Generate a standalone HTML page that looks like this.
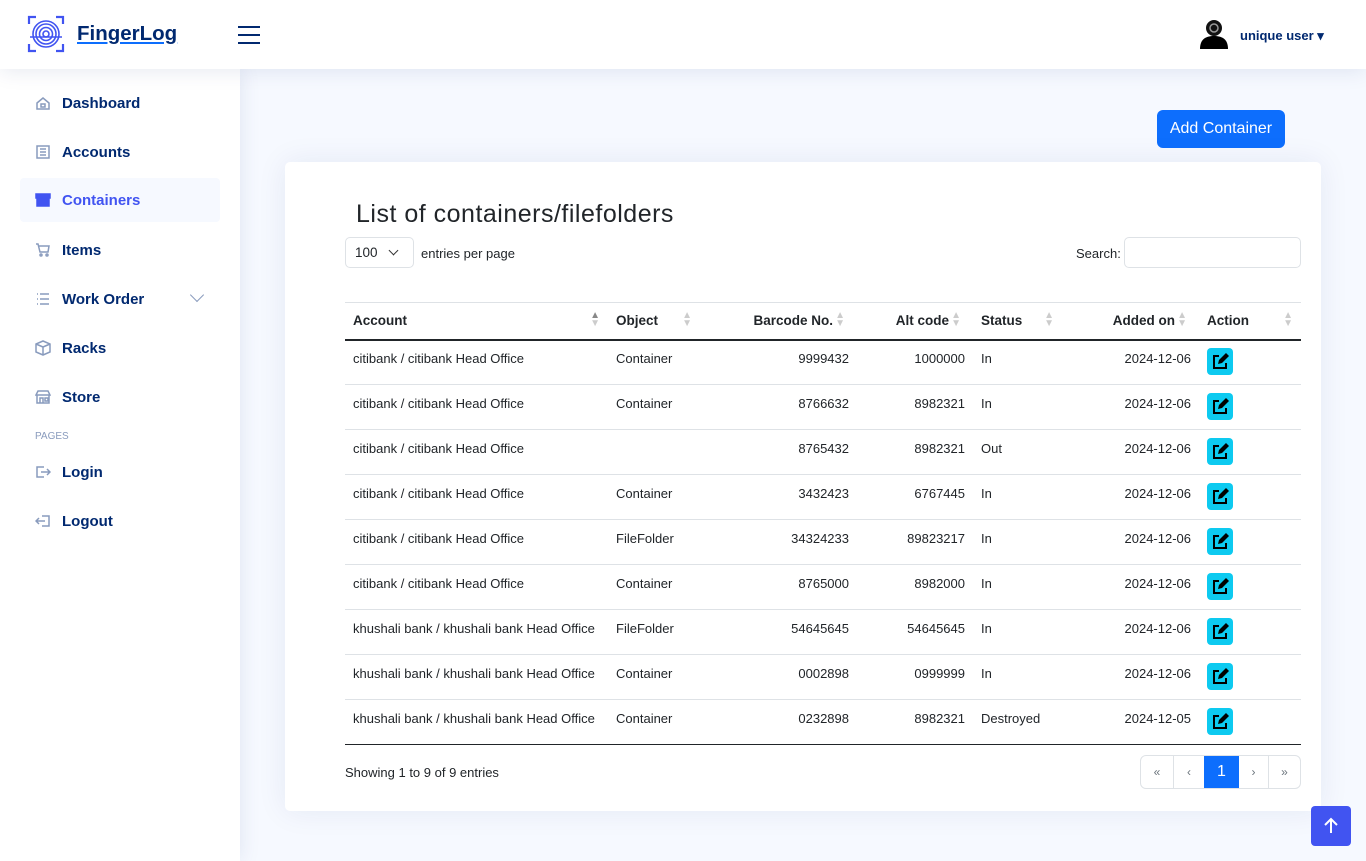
<!DOCTYPE html>
<html><head><meta charset="utf-8">
<style>
*{box-sizing:border-box;margin:0;padding:0}
body{width:1366px;height:861px;overflow:hidden;background:#f6f9ff;font-family:"Liberation Sans",sans-serif;color:#212529;position:relative}
.hdr{position:absolute;left:0;top:0;width:1366px;height:69px;background:#fff;box-shadow:0 2px 20px rgba(1,41,112,.1);z-index:2}
.side{position:absolute;left:0;top:69px;width:240px;height:792px;background:#fff;box-shadow:0 0 20px rgba(1,41,112,.1)}
.nav{position:absolute;left:20px;width:200px;height:44px;display:flex;align-items:center;padding-left:15px;font-size:15px;font-weight:bold;color:#012970}
.nav svg{width:16px;height:16px;margin-right:11px;fill:none;stroke:#899bbd;stroke-width:1.5}
.nav.act{background:#f6f9ff;color:#4154f1;border-radius:4px}
.card{position:absolute;left:285px;top:162px;width:1036px;height:649px;background:#fff;border-radius:5px;box-shadow:0 0 30px rgba(1,41,112,.08)}
table{position:absolute;left:345px;top:302px;border-collapse:collapse;font-size:13px;table-layout:fixed;width:956px}
th{height:37px;text-align:left;padding:0 8px;font-weight:bold;color:#212529;border-top:1px solid #dee2e6;border-bottom:2px solid #212529;position:relative;font-size:13.5px}
td{height:45px;padding:0 8px 6px;border-bottom:1px solid #dee2e6;color:#212529;line-height:16px;vertical-align:middle}
tr:last-child td{border-bottom:1px solid #212529}
.r{text-align:right}
th.r{padding-right:24px}
.ar{position:absolute;right:8px;top:9px;font-size:10px;line-height:8px;color:#ccc}
.ed{display:inline-block;width:26px;height:27px;background:#0dcaf0;border-radius:4px;vertical-align:middle;position:relative;top:6px;margin-top:-8px}
</style></head><body>
<div class="hdr">
<svg style="position:absolute;left:27px;top:15px" width="38" height="38" viewBox="0 0 38 38" fill="none" stroke="#4154f1" stroke-width="2.2"><path d="M2 9V2h7M29 2h7v7M36 29v7h-7M9 36H2v-7"/><g stroke-width="1.6"><circle cx="19" cy="19" r="3"/><circle cx="19" cy="19" r="6.5"/><circle cx="19" cy="19" r="10"/><circle cx="19" cy="19" r="13"/></g><path d="M3 22h32" stroke-width="1.5"/></svg>
<div style="position:absolute;left:77px;top:22px;font-size:20.5px;font-weight:bold;color:#012970;text-decoration:underline;text-decoration-color:#0d6efd">FingerLog</div>
<div style="position:absolute;left:238px;top:26px;width:22px;height:2px;background:#012970;box-shadow:0 8px 0 #012970,0 16px 0 #012970"></div>
<svg style="position:absolute;left:1198px;top:17px" width="32" height="34" viewBox="0 0 32 34"><circle cx="16" cy="11" r="8" fill="#111"/><circle cx="16" cy="11" r="4" fill="none" stroke="#999" stroke-width="1.5"/><path d="M2 32c0-10 6-13 14-13s14 3 14 13z" fill="#000"/></svg>
<div style="position:absolute;left:1240px;top:28px;font-size:13px;font-weight:bold;color:#012970">unique user ▾</div>
</div>
<div class="side">
<div class="nav" style="top:12px"><svg viewBox="0 0 16 16"><path d="M2 8l6-5 6 5v6H2z"/><rect x="6" y="9" width="4" height="3"/></svg>Dashboard</div>
<div class="nav" style="top:61px"><svg viewBox="0 0 16 16"><rect x="2" y="2" width="12" height="12"/><path d="M5 5h6M5 8h6M5 11h6"/></svg>Accounts</div>
<div class="nav act" style="top:109px"><svg viewBox="0 0 16 16"><rect x="1" y="2" width="14" height="4" fill="#4154f1" stroke="#4154f1"/><rect x="2" y="6" width="12" height="8" fill="#4154f1" stroke="#4154f1"/></svg>Containers</div>
<div class="nav" style="top:159px"><svg viewBox="0 0 16 16"><path d="M1 2h2l2 8h8l1-6H4"/><circle cx="6" cy="13" r="1"/><circle cx="12" cy="13" r="1"/></svg>Items</div>
<div class="nav" style="top:208px"><svg viewBox="0 0 16 16"><path d="M2 3h1M2 8h1M2 13h1M5 3h9M5 8h9M5 13h9"/></svg>Work Order<span style="position:absolute;left:172px;top:13px;width:10px;height:10px;border-right:1px solid #899bbd;border-bottom:1px solid #899bbd;transform:rotate(45deg)"></span></div>
<div class="nav" style="top:257px"><svg viewBox="0 0 16 16"><path d="M8 1l7 3v8l-7 3-7-3V4zM1 4l7 3 7-3M8 7v8"/></svg>Racks</div>
<div class="nav" style="top:306px"><svg viewBox="0 0 16 16"><path d="M1 6l2-4h10l2 4zM2 6v8h12V6M5 14v-5h3v5M10 9h3v3h-3z"/></svg>Store</div>
<div style="position:absolute;left:35px;top:362px;font-size:10px;color:#899bbd">PAGES</div>
<div class="nav" style="top:381px"><svg viewBox="0 0 16 16"><path d="M9 3H2v10h7M6 8h9M12 5l3 3-3 3"/></svg>Login</div>
<div class="nav" style="top:430px"><svg viewBox="0 0 16 16"><path d="M7 3h7v10H7M10 8H1M4 5L1 8l3 3"/></svg>Logout</div>
</div>
<div style="position:absolute;left:1157px;top:110px;width:128px;height:38px;background:#0d6efd;border-radius:6px;color:#fff;font-size:16px;line-height:38px;text-align:center">Add Container</div>
<div class="card"></div>
<div style="position:absolute;left:356px;top:200px;font-size:25px;letter-spacing:0.5px;color:#212529">List of containers/filefolders</div>
<div style="position:absolute;left:345px;top:237px;width:69px;height:31px;border:1px solid #dee2e6;border-radius:5px;font-size:13.5px;line-height:30px;padding-left:9px">100 <span style="position:absolute;left:44px;top:9px;width:7px;height:7px;border-right:1.5px solid #333;border-bottom:1.5px solid #333;transform:rotate(45deg)"></span></div>
<div style="position:absolute;left:421px;top:246px;font-size:13px">entries per page</div>
<div style="position:absolute;left:1076px;top:246px;font-size:13px">Search:</div>
<div style="position:absolute;left:1124px;top:237px;width:177px;height:31px;border:1px solid #dee2e6;border-radius:5px"></div>
<table>
<colgroup><col style="width:263px"><col style="width:92px"><col style="width:157px"><col style="width:116px"><col style="width:89px"><col style="width:137px"><col style="width:102px"></colgroup>
<tr><th>Account<span class="ar"><span style="color:#888">▲</span><br>▼</span></th><th>Object<span class="ar">▲<br>▼</span></th><th class="r">Barcode No.<span class="ar" style="right:12px">▲<br>▼</span></th><th class="r">Alt code<span class="ar" style="right:12px">▲<br>▼</span></th><th>Status<span class="ar">▲<br>▼</span></th><th class="r">Added on<span class="ar" style="right:12px">▲<br>▼</span></th><th>Action<span class="ar">▲<br>▼</span></th></tr>
<tr><td>citibank / citibank Head Office</td><td>Container</td><td class="r">9999432</td><td class="r">1000000</td><td>In</td><td class="r">2024-12-06</td><td><span class="ed"><svg width="26" height="27" viewBox="0 0 26 27"><path d="M12 8H7v12h12v-5" fill="none" stroke="#000" stroke-width="2"/><path d="M11 16l1-4 7-7 3 3-7 7z" fill="#000"/></svg></span></td></tr>
<tr><td>citibank / citibank Head Office</td><td>Container</td><td class="r">8766632</td><td class="r">8982321</td><td>In</td><td class="r">2024-12-06</td><td><span class="ed"><svg width="26" height="27" viewBox="0 0 26 27"><path d="M12 8H7v12h12v-5" fill="none" stroke="#000" stroke-width="2"/><path d="M11 16l1-4 7-7 3 3-7 7z" fill="#000"/></svg></span></td></tr>
<tr><td>citibank / citibank Head Office</td><td></td><td class="r">8765432</td><td class="r">8982321</td><td>Out</td><td class="r">2024-12-06</td><td><span class="ed"><svg width="26" height="27" viewBox="0 0 26 27"><path d="M12 8H7v12h12v-5" fill="none" stroke="#000" stroke-width="2"/><path d="M11 16l1-4 7-7 3 3-7 7z" fill="#000"/></svg></span></td></tr>
<tr><td>citibank / citibank Head Office</td><td>Container</td><td class="r">3432423</td><td class="r">6767445</td><td>In</td><td class="r">2024-12-06</td><td><span class="ed"><svg width="26" height="27" viewBox="0 0 26 27"><path d="M12 8H7v12h12v-5" fill="none" stroke="#000" stroke-width="2"/><path d="M11 16l1-4 7-7 3 3-7 7z" fill="#000"/></svg></span></td></tr>
<tr><td>citibank / citibank Head Office</td><td>FileFolder</td><td class="r">34324233</td><td class="r">89823217</td><td>In</td><td class="r">2024-12-06</td><td><span class="ed"><svg width="26" height="27" viewBox="0 0 26 27"><path d="M12 8H7v12h12v-5" fill="none" stroke="#000" stroke-width="2"/><path d="M11 16l1-4 7-7 3 3-7 7z" fill="#000"/></svg></span></td></tr>
<tr><td>citibank / citibank Head Office</td><td>Container</td><td class="r">8765000</td><td class="r">8982000</td><td>In</td><td class="r">2024-12-06</td><td><span class="ed"><svg width="26" height="27" viewBox="0 0 26 27"><path d="M12 8H7v12h12v-5" fill="none" stroke="#000" stroke-width="2"/><path d="M11 16l1-4 7-7 3 3-7 7z" fill="#000"/></svg></span></td></tr>
<tr><td>khushali bank / khushali bank Head Office</td><td>FileFolder</td><td class="r">54645645</td><td class="r">54645645</td><td>In</td><td class="r">2024-12-06</td><td><span class="ed"><svg width="26" height="27" viewBox="0 0 26 27"><path d="M12 8H7v12h12v-5" fill="none" stroke="#000" stroke-width="2"/><path d="M11 16l1-4 7-7 3 3-7 7z" fill="#000"/></svg></span></td></tr>
<tr><td>khushali bank / khushali bank Head Office</td><td>Container</td><td class="r">0002898</td><td class="r">0999999</td><td>In</td><td class="r">2024-12-06</td><td><span class="ed"><svg width="26" height="27" viewBox="0 0 26 27"><path d="M12 8H7v12h12v-5" fill="none" stroke="#000" stroke-width="2"/><path d="M11 16l1-4 7-7 3 3-7 7z" fill="#000"/></svg></span></td></tr>
<tr><td>khushali bank / khushali bank Head Office</td><td>Container</td><td class="r">0232898</td><td class="r">8982321</td><td>Destroyed</td><td class="r">2024-12-05</td><td><span class="ed"><svg width="26" height="27" viewBox="0 0 26 27"><path d="M12 8H7v12h12v-5" fill="none" stroke="#000" stroke-width="2"/><path d="M11 16l1-4 7-7 3 3-7 7z" fill="#000"/></svg></span></td></tr>
</table>
<div style="position:absolute;left:345px;top:765px;font-size:13px">Showing 1 to 9 of 9 entries</div>
<div style="position:absolute;left:1140px;top:755px;width:161px;height:34px;border:1px solid #dee2e6;border-radius:6px;display:flex;font-size:12px;color:#6c757d;line-height:32px;overflow:hidden">
<div style="width:33px;text-align:center;border-right:1px solid #dee2e6">«</div>
<div style="width:30px;text-align:center">‹</div>
<div style="width:35px;text-align:center;background:#0d6efd;color:#fff;font-size:16px">1</div>
<div style="width:30px;text-align:center;border-right:1px solid #dee2e6">›</div>
<div style="width:31px;text-align:center">»</div>
</div>
<div style="position:absolute;left:1311px;top:806px;width:40px;height:40px;background:#4154f1;border-radius:4px">
<svg width="40" height="40" viewBox="0 0 40 40" fill="none" stroke="#fff" stroke-width="2"><path d="M20 27V13M14 19l6-6 6 6"/></svg></div>
</body></html>
